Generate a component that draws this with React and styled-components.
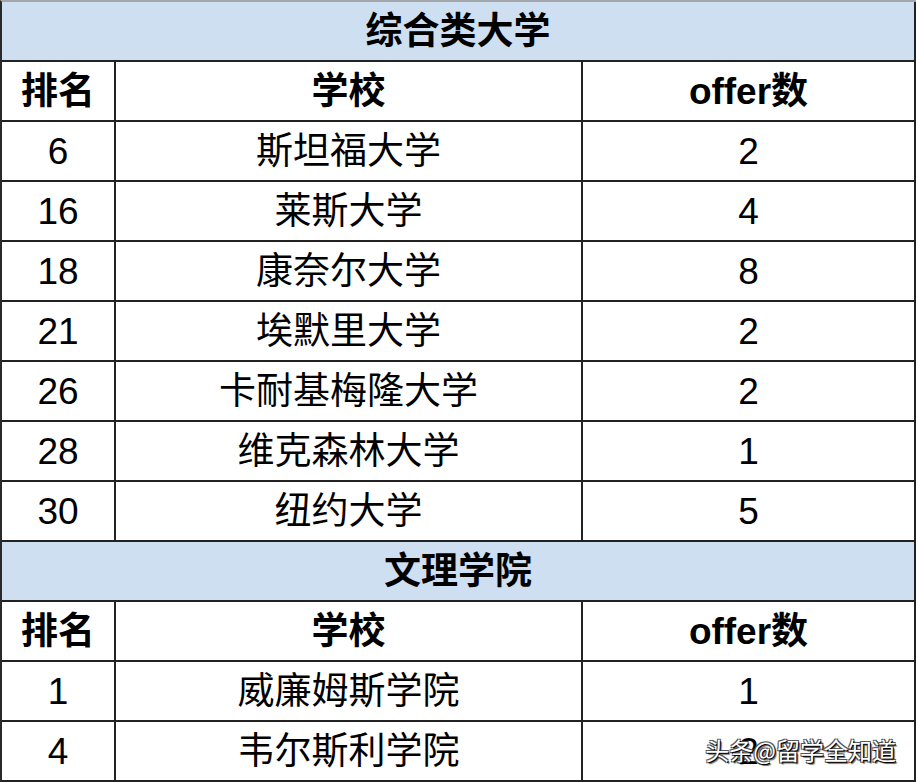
import React from "react";
import styled, { createGlobalStyle } from "styled-components";

const Global = createGlobalStyle`
  html, body { margin: 0; padding: 0; background: #fff; }
  body { font-family: "Liberation Sans", "Noto Sans CJK SC", sans-serif; }
`;

const Page = styled.div`
  position: relative;
  width: 916px;
  height: 782px;
  background: #fff;
  box-sizing: border-box;
  border-top: 2px solid #a3a7ab;
  border-left: 2px solid #2a2a2a;
  overflow: hidden;
`;

const Row = styled.div`
  display: grid;
  grid-template-columns: ${(p) => (p.$band ? "1fr" : "114px 467px 333px")};
  height: 60px;
  box-sizing: border-box;
  border-bottom: 2px solid #222;
  background: ${(p) => (p.$band ? "#cddff0" : "#fff")};
`;

const Cell = styled.div`
  display: flex;
  align-items: center;
  justify-content: center;
  box-sizing: border-box;
  border-right: 2px solid #222;
  color: #000;
  font-family: "Liberation Sans", "Noto Sans CJK SC", sans-serif;
  font-size: 37px;
  font-weight: ${(p) => (p.$bold ? 700 : 400)};
  line-height: 1;
  white-space: nowrap;
`;

const Watermark = styled.div`
  position: absolute;
  right: 20px;
  bottom: 20px;
  font-family: "Noto Sans CJK SC", sans-serif;
  font-size: 24px;
  line-height: 1;
  color: #fff;
  text-shadow: 1px 1px 0 #000, -1px -1px 0 #555, 1px -1px 0 #555, -1px 1px 0 #555, 2px 2px 1px rgba(0,0,0,0.6);
`;

const sections = [
  {
    title: "综合类大学",
    rows: [
      ["6", "斯坦福大学", "2"],
      ["16", "莱斯大学", "4"],
      ["18", "康奈尔大学", "8"],
      ["21", "埃默里大学", "2"],
      ["26", "卡耐基梅隆大学", "2"],
      ["28", "维克森林大学", "1"],
      ["30", "纽约大学", "5"],
    ],
  },
  {
    title: "文理学院",
    rows: [
      ["1", "威廉姆斯学院", "1"],
      ["4", "韦尔斯利学院", "2"],
    ],
  },
];

export default function App() {
  return (
    <>
      <Global />
      <Page>
        {sections.map((s) => (
          <React.Fragment key={s.title}>
            <Row $band>
              <Cell $bold>{s.title}</Cell>
            </Row>
            <Row>
              <Cell $bold>排名</Cell>
              <Cell $bold>学校</Cell>
              <Cell $bold>offer数</Cell>
            </Row>
            {s.rows.map((r) => (
              <Row key={r[1]}>
                <Cell>{r[0]}</Cell>
                <Cell>{r[1]}</Cell>
                <Cell>{r[2]}</Cell>
              </Row>
            ))}
          </React.Fragment>
        ))}
        <Watermark>头条@留学全知道</Watermark>
      </Page>
    </>
  );
}
